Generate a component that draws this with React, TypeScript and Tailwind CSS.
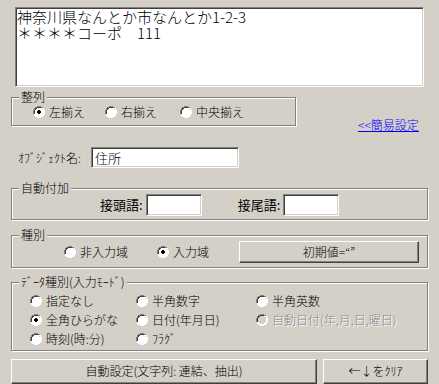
import React from "react";

const FONT = { fontFamily: '"Noto Sans CJK JP", "Noto Sans", sans-serif' };

function RadioIcon({ checked, disabled }: { checked?: boolean; disabled?: boolean }) {
  return (
    <svg width="12" height="12" viewBox="0 0 12 12" className="shrink-0">
      <path d="M4 0h4v1h2v1h1v2h1v4h-1v2h-1v1h-2v1h-4v-1h-2v-1h-1v-2h-1v-4h1v-2h1v-1h2z" fill="#ffffff" />
      <path d="M4 0h4v1h2v1h-2v-1h-4v1h-2v2h-1v4h-1v-4h1v-2h1v-1h2z" fill="#808080" />
      <path d="M4 1h4v1h-4zM2 2h2v1h-1v1h-1zM1 4h1v4h-1z" fill="#404040" />
      <path d="M10 2h1v2h1v4h-1v2h-1v1h-2v1h-4v-1h-2v-1h2v1h4v-1h2v-2h1v-4h-1z" fill="#ffffff" />
      <path d="M9 3h1v5h-1v1h-1v1h-4v-1h4v-1h1z" fill="#d4d0c8" />
      <path d="M4 2h4v1h1v1h1v4h-1v1h-1v1h-4v-1h-1v-1h-1v-4h1v-1h1z" fill={disabled ? "#d4d0c8" : "#ffffff"} />
      {checked && <path d="M5 4h2v1h1v2h-1v1h-2v-1h-1v-2h1z" fill="#000000" />}
    </svg>
  );
}

function Radio({ label, checked, disabled, className = "" }: { label: string; checked?: boolean; disabled?: boolean; className?: string }) {
  return (
    <div className={`flex items-center gap-[4px] ${className}`}>
      <RadioIcon checked={checked} disabled={disabled} />
      <span
        className={`text-[12px] leading-[14px] font-light whitespace-nowrap ${disabled ? "text-[#8a8a8a] [text-shadow:1px_1px_0_#ffffff]" : "text-black"}`}
      >
        {label}
      </span>
    </div>
  );
}

function Group({ title, className = "", children }: { title: string; className?: string; children?: React.ReactNode }) {
  return (
    <div className={`relative border border-[#808080] shadow-[inset_1px_1px_0_#ffffff,1px_1px_0_#ffffff] ${className}`}>
      <span className="absolute left-[7px] top-[-8px] bg-[#d4d0c8] px-[2px] text-[12px] leading-[14px] font-light text-black whitespace-nowrap">
        {title}
      </span>
      {children}
    </div>
  );
}

function Button({ children, className = "" }: { children: React.ReactNode; className?: string }) {
  return (
    <div
      className={`flex items-center justify-center border border-t-white border-l-white border-b-[#404040] border-r-[#404040] shadow-[inset_-1px_-1px_0_#808080] bg-[#d4d0c8] text-[12px] leading-[14px] font-light text-black whitespace-nowrap ${className}`}
    >
      {children}
    </div>
  );
}

const sunken =
  "border border-t-[#808080] border-l-[#808080] border-b-white border-r-white shadow-[inset_1px_1px_0_#404040,inset_-1px_-1px_0_#d4d0c8] bg-white";

export default function App() {
  return (
    <div className="w-[439px] h-[384px] bg-[#d4d0c8] flex flex-col overflow-hidden" style={FONT}>
      {/* text area */}
      <div className={`ml-[15px] mt-[7px] w-[409px] h-[81px] ${sunken} pl-[1px] pt-[1px]`}>
        <div className="text-[15px] leading-[16px] font-light text-black whitespace-pre">神奈川県なんとか市なんとか1-2-3</div>
        <div className="text-[15px] leading-[16px] font-light text-black whitespace-pre">＊＊＊＊コーポ　111</div>
      </div>

      {/* 整列 */}
      <div className="mt-[10px] flex items-start">
        <Group title="整列" className="ml-[11px] w-[285px] h-[29px] flex items-center pl-[21px] pt-[1px]">
          <Radio label="左揃え" checked className="w-[72px]" />
          <Radio label="右揃え" className="w-[75px]" />
          <Radio label="中央揃え" />
        </Group>
        <span className="ml-[62px] mt-[21px] text-[12px] leading-[14px] font-light text-[#0000ff] underline whitespace-nowrap">
          {"<<簡易設定"}
        </span>
      </div>

      {/* オブジェクト名 */}
      <div className="mt-[15px] flex items-center">
        <span className="ml-[18px] w-[73px] text-[12px] leading-[14px] font-light text-black whitespace-nowrap">ｵﾌﾞｼﾞｪｸﾄ名:</span>
        <div className={`w-[148px] h-[21px] ${sunken} flex items-center pl-[3px] text-[13px] leading-[15px] font-light text-black`}>住所</div>
      </div>

      {/* 自動付加 */}
      <Group title="自動付加" className="mt-[20px] ml-[11px] w-[417px] h-[32px] flex items-center pt-[1px]">
        <span className="ml-[88px] text-[13px] leading-[15px] text-black whitespace-nowrap">接頭語:</span>
        <div className={`ml-[3px] w-[56px] h-[22px] ${sunken}`} />
        <span className="ml-[36px] text-[13px] leading-[15px] text-black whitespace-nowrap">接尾語:</span>
        <div className={`ml-[3px] w-[56px] h-[22px] ${sunken}`} />
      </Group>

      {/* 種別 */}
      <Group title="種別" className="mt-[15px] ml-[11px] w-[417px] h-[33px] flex items-center pt-[1px]">
        <Radio label="非入力域" className="ml-[52px] w-[93px]" />
        <Radio label="入力域" checked className="w-[82px]" />
        <Button className="w-[180px] h-[22px]">初期値=“”</Button>
      </Group>

      {/* データ種別 */}
      <Group title="ﾃﾞｰﾀ種別(入力ﾓｰﾄﾞ)" className="mt-[14px] ml-[11px] w-[417px] h-[70px] pt-[9px] pl-[18px]">
        <div className="grid grid-cols-[106px_120px_160px] grid-rows-[19px_19px_19px] items-center">
          <Radio label="指定なし" />
          <Radio label="半角数字" />
          <Radio label="半角英数" />
          <Radio label="全角ひらがな" checked />
          <Radio label="日付(年月日)" />
          <Radio label="自動日付(年,月,日,曜日)" disabled />
          <Radio label="時刻(時:分)" />
          <Radio label="ﾌﾗｸﾞ" />
        </div>
      </Group>

      {/* buttons */}
      <div className="mt-[8px] flex">
        <Button className="ml-[11px] w-[306px] h-[25px]">自動設定(文字列: 連結、抽出)</Button>
        <Button className="ml-[6px] w-[105px] h-[25px]">←↓をｸﾘｱ</Button>
      </div>
    </div>
  );
}
